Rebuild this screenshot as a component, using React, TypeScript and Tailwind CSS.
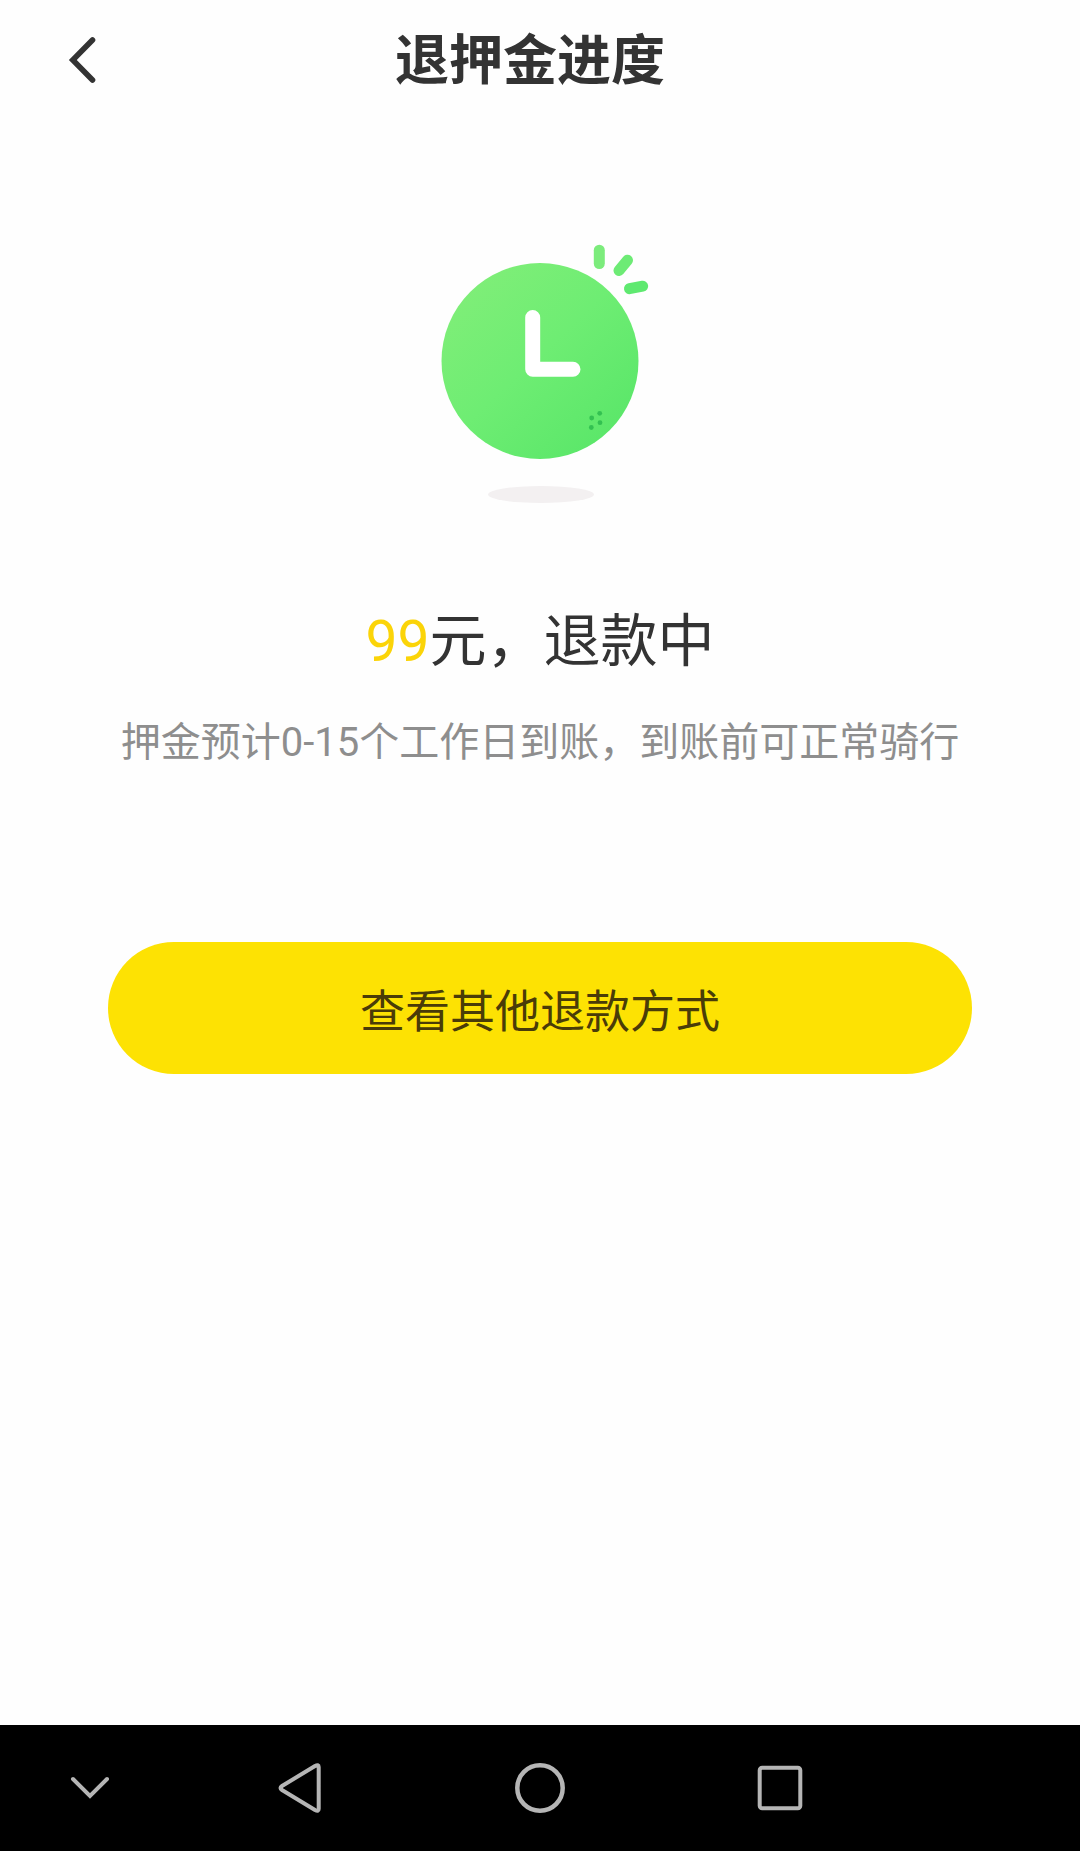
const Header = ()=>{
    return(
        <header className="flex items-center h-[116px] px-15">
            <button type="button" aria-label="返回" className="w-12 h-15 flex items-center cursor-pointer">
                <svg width="46" height="60" viewBox="0 0 46 60" fill="none" stroke="#333333" strokeWidth="5.6" strokeLinecap="round">
                    <path d="M32.5 12 L12.8 32 L32.5 52" />
                </svg>
            </button>
            <h1 className="grow text-center pt-2 pr-17 text-[54px] leading-[80px] font-bold">退押金进度</h1>
        </header>
    )
}

const ClockPicture = ()=>{
    return(
        <svg width="240" height="290" viewBox="0 0 240 290" fill="none" aria-hidden="true">
            <defs>
                <linearGradient id="face" x1="50" y1="50" x2="190" y2="200" gradientUnits="userSpaceOnUse">
                    <stop offset="0" stopColor="#7fee78" />
                    <stop offset="0.5" stopColor="#6eed73" />
                    <stop offset="1" stopColor="#5ce76a" />
                </linearGradient>
            </defs>
            <ellipse cx="120" cy="131" rx="98.5" ry="98" fill="url(#face)" />
            <path d="M112.7 87.5 V139.3 H153" stroke="#ffffff" strokeWidth="15" strokeLinecap="round" strokeLinejoin="round" />
            <g strokeWidth="11" strokeLinecap="round">
                <path d="M179.3 20.2 V33.6" stroke="#7cec7c" />
                <path d="M199 40.5 L207.5 30.3" stroke="#6deb75" />
                <path d="M209.5 58.7 L222.7 56.2" stroke="#5fe970" />
            </g>
            <g fill="#33c151">
                <circle cx="179.7" cy="183.3" r="2.4" />
                <circle cx="171.7" cy="188" r="2.4" />
                <circle cx="180" cy="192.7" r="2.4" />
                <circle cx="171.3" cy="197.5" r="2.4" />
            </g>
            <ellipse cx="121" cy="264.5" rx="53" ry="8.5" fill="#f3f0f1" />
        </svg>
    )
}

const NavBar = ()=>{
    return(
        <nav className="grid grid-cols-[3fr_4fr_4fr_4fr_3fr] h-[126px] items-center justify-items-center bg-black text-[#b5b5b5]">
            <button type="button" aria-label="收起" className="cursor-pointer">
                <svg width="60" height="60" viewBox="0 0 60 60" fill="none" stroke="currentColor" strokeWidth="4" strokeLinecap="round">
                    <path d="M13 21 L30 38 L47 21" />
                </svg>
            </button>
            <button type="button" aria-label="后退" className="cursor-pointer">
                <svg width="60" height="60" viewBox="0 0 60 60" fill="none" stroke="currentColor" strokeWidth="4" strokeLinejoin="round">
                    <path d="M10.5 30 Q10.5 29 12 28 L45 8 Q48.7 6 48.7 9 V51 Q48.7 54 45 52 L12 32 Q10.5 31 10.5 30 Z" />
                </svg>
            </button>
            <button type="button" aria-label="主屏幕" className="cursor-pointer">
                <svg width="60" height="60" viewBox="0 0 60 60" fill="none" stroke="currentColor" strokeWidth="4.5">
                    <circle cx="30" cy="30" r="22.7" />
                </svg>
            </button>
            <button type="button" aria-label="最近任务" className="cursor-pointer">
                <svg width="60" height="60" viewBox="0 0 60 60" fill="none" stroke="currentColor" strokeWidth="4">
                    <rect x="9.7" y="9.7" width="40.6" height="40.6" rx="2.5" />
                </svg>
            </button>
        </nav>
    )
}

const App = ()=>{
    return(
        <div className="min-h-screen flex flex-col bg-[#fefefe] text-[#333333] font-[Roboto,'Noto_Sans_CJK_SC',sans-serif]">
            <Header />
            <main className="grow flex flex-col items-center pt-[114px]">
                <ClockPicture />
                <h2 className="mt-[82px] text-[57px] leading-[80px]"><span className="text-[#fbd408]">99</span>元，退款中</h2>
                <p className="mt-[31px] text-[40px] leading-[60px] text-[#8e8e8e]">押金预计0-15个工作日到账，到账前可正常骑行</p>
                <button type="button" className="mt-[169px] pt-2.5 w-4/5 h-[132px] rounded-full bg-[#fde203] text-[45px] leading-[60px] text-[#4a3c08] cursor-pointer">查看其他退款方式</button>
            </main>
            <NavBar />
        </div>
    )
}

export default App;
